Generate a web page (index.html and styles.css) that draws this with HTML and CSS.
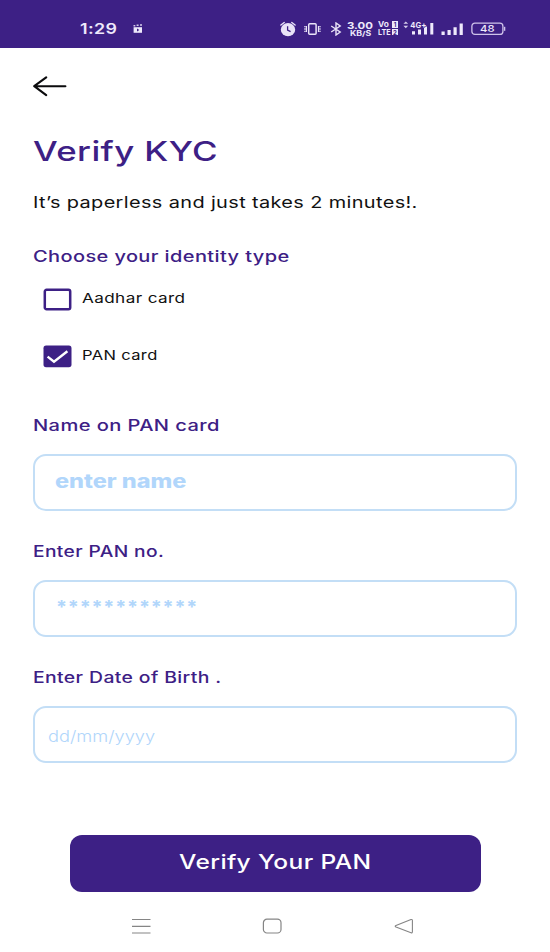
FILE: index.html
```html
<!DOCTYPE html>
<html lang="en">
<head>
<meta charset="utf-8">
<title>Verify KYC</title>
<link rel="stylesheet" href="styles.css">
</head>
<body>
<header class="status">
  <span class="clock"><span class="t clock-text">1:29</span></span>
  <svg class="icon-media" width="10" height="10" viewBox="0 0 10 10"><path d="M.6 3.2h8.4v5.6H.6z" fill="#eee9fb"/><path d="M.5 1.7h1.8M3.6 1.3h2M7 .9h2" stroke="#d5cbea" stroke-width="1.5"/><path d="M4 4.6l2.4 1.4L4 7.4z" fill="#3d2085"/></svg>
  <svg class="icon-alarm" width="16" height="16" viewBox="0 0 16 16"><ellipse cx="8" cy="8.7" rx="7.2" ry="6.6" fill="#e9e3f7"/><path d="M.9 4L4.2 1.5M15.1 4L11.8 1.5" stroke="#e9e3f7" stroke-width="1.4" stroke-linecap="round"/><path d="M7.6 5.2v4l3 1.5" fill="none" stroke="#3d2085" stroke-width="1.3"/></svg>
  <svg class="icon-vibrate" width="17" height="14" viewBox="0 0 17 14"><rect x="4.7" y="1.8" width="7.4" height="10.4" rx="1" fill="none" stroke="#e9e3f7" stroke-width="1.5"/><path d="M2.4 4v6M.9 4v1.3M.9 6.3v1.4M.9 8.7V10M14.5 4v6M16 4v1.3M16 6.3v1.4M16 8.7V10" stroke="#e9e3f7" stroke-width="1.2"/></svg>
  <svg class="icon-bt" width="12" height="14" viewBox="0 0 12 14"><path d="M1.2 4l9 6L6 13V1l4.2 3-9 6" fill="none" stroke="#e9e3f7" stroke-width="1.4"/></svg>
  <div class="speed"><span class="t speed-num">3.00</span><span class="t speed-unit">KB/S</span></div>
  <div class="volte"><span class="volte-row"><span class="t vo">Vo</span><i>1</i></span><span class="volte-row"><span class="t lte">LTE</span><i>2</i></span></div>
  <svg class="icon-cell" width="32" height="16" viewBox="0 0 32 16"><path d="M.4 3.8L2.8 1.4l2.4 2.4zM.4 5.8l2.4 2.4 2.4-2.4z" fill="#d5cbea"/><path d="M9 11.2h3v3.4H9zM15 9.5h3v5.1h-3zM21 6.5h3v8.1h-3zM27.3 3h3v11.6h-3z" fill="#eee9fb"/><text x="7.3" y="7.8" textLength="16" lengthAdjust="spacingAndGlyphs" class="cell-text">4G+</text></svg>
  <svg class="icon-bars" width="23" height="13" viewBox="0 0 23 13"><path d="M.5 8.5h3.2V12H.5zM6.5 7h3.2v5H6.5zM12.5 4.3h3.2V12h-3.2zM18.6.5h3.2V12h-3.2z" fill="#eee9fb"/></svg>
  <svg class="icon-battery" width="35" height="14" viewBox="0 0 35 14"><rect x=".9" y="1.2" width="31" height="11.2" rx="3" fill="none" stroke="#cfc3ea" stroke-width="1.3"/><path d="M33.6 4.8v4" stroke="#cfc3ea" stroke-width="1.4"/><text x="9" y="10.4" textLength="14.5" lengthAdjust="spacingAndGlyphs" class="battery-text">48</text></svg>
</header>
<main class="page">
  <svg class="back" width="36" height="24" viewBox="0 0 36 24"><path d="M32.4 12.2H1.4M13.2 3.3L1.2 12.2l12 8.9" fill="none" stroke="#0b0b0d" stroke-width="2.1" stroke-linecap="round" stroke-linejoin="round"/></svg>
  <h1><span class="t title">Verify KYC</span></h1>
  <p class="lead"><span class="t lead-text">It’s paperless and just takes 2 minutes!.</span></p>
  <h2 class="label"><span class="t choose">Choose your identity type</span></h2>
  <div class="options">
    <div class="option"><svg class="check" width="29" height="23" viewBox="0 0 29 23"><rect x="1.8" y="1.8" width="25.4" height="19.4" rx="1.8" fill="none" stroke="#3d2085" stroke-width="2.5"/></svg><span class="t aadhar">Aadhar card</span></div>
    <div class="option"><svg class="check" width="29" height="23" viewBox="0 0 29 23"><rect x=".5" y=".6" width="28" height="21.6" rx="2.6" fill="#3d2085"/><path d="M4.6 11.6l6.4 5.2L24.4 6.2" fill="none" stroke="#fff" stroke-width="2.4"/></svg><span class="t pan">PAN card</span></div>
  </div>
  <div class="field"><div class="label"><span class="t name">Name on PAN card</span></div><div class="box box-name"><span class="t ph-name">enter name</span></div></div>
  <div class="field"><div class="label"><span class="t number">Enter PAN no.</span></div><div class="box box-number"><span class="t ph-number">************</span></div></div>
  <div class="field"><div class="label"><span class="t birth">Enter Date of Birth .</span></div><div class="box box-birth"><span class="t ph-birth">dd/mm/yyyy</span></div></div>
  <div class="submit"><span class="t submit-text">Verify Your PAN</span></div>
</main>
<footer class="nav">
  <svg width="20" height="17" viewBox="0 0 20 17"><path d="M1 1.5h18.5M1 8.3h18.5M1 15h18.5" stroke="#858585" stroke-width="1.2"/></svg>
  <svg width="20" height="17" viewBox="0 0 20 17"><rect x="1.4" y="1.2" width="17.6" height="13.8" rx="3.6" fill="none" stroke="#858585" stroke-width="1.2"/></svg>
  <svg width="20" height="17" viewBox="0 0 20 17"><path d="M17 1.5L2 7.4q-1.6.8 0 1.6L17 14.8q1.4.3 1.4-1V2.6q0-1.4-1.4-1.1z" fill="none" stroke="#858585" stroke-width="1.1"/></svg>
</footer>
</body>
</html>
```
FILE: styles.css
```css
* { box-sizing: border-box; }
body { margin: 0; width: 550px; height: 952px; background: #fff; font-family: Inter, "Open Sans", sans-serif; overflow: hidden; }
h1, h2, p { margin: 0; }

/* Wide letterforms: each text is stretched to its own width */
.t { display: inline-block; white-space: nowrap; letter-spacing: .3px; transform: scaleX(var(--wide, 1)); transform-origin: 0 50%; }
.clock-text { --wide: 1.19; }
.speed-num { --wide: 1.2; }
.speed-unit { --wide: 1.25; }
.vo { --wide: 1.1; }
.lte { --wide: .95; }
.title { --wide: 1.268; }
.lead-text { --wide: 1.244; }
.choose { --wide: 1.29; }
.aadhar { --wide: 1.289; }
.pan { --wide: 1.24; }
.name { --wide: 1.298; }
.number { --wide: 1.238; }
.birth { --wide: 1.25; }
.ph-name { --wide: 1.236; }
.ph-number { --wide: 1.1; }
.ph-birth { --wide: 1.14; }
.submit-text { --wide: 1.227; }

.status { display: flex; align-items: flex-start; height: 47.5px; background: #3d2085; color: #eee9fb; }
.status svg, .status div, .clock { flex: none; }
.clock { width: 53px; margin: 18.5px 0 0 80px; font-size: 15px; line-height: 20px; font-weight: 600; }
.icon-media { margin-top: 24px; }
.icon-alarm { margin: 20.5px 0 0 137px; }
.icon-vibrate { margin: 22px 0 0 8px; }
.icon-bt { margin: 22px 0 0 9px; }
.speed { width: 27px; margin: 21px 0 0 5px; }
.speed-num, .speed-unit { display: block; width: max-content; font-weight: 700; letter-spacing: 0; }
.speed-num { font-size: 9.5px; line-height: 9px; }
.speed-unit { font-size: 7px; line-height: 7px; margin: 0 0 0 3px; }
.volte { width: 20px; margin: 21px 0 0 4px; font-size: 7.6px; font-weight: 700; }
.volte .t { letter-spacing: 0; }
.volte-row { display: flex; justify-content: space-between; line-height: 7.5px; }
.volte i { width: 6px; height: 6.5px; background: #eee9fb; color: #3d2085; font-size: 6px; line-height: 7px; text-align: center; font-style: normal; }
.icon-cell { margin: 20px 0 0 5px; }
.cell-text { font-size: 8px; font-weight: 700; fill: #eee9fb; stroke: #3d2085; stroke-width: .8px; paint-order: stroke; }
.icon-bars { margin: 22.5px 0 0 6px; }
.icon-battery { margin: 21.5px 0 0 7px; }
.battery-text { font-size: 9.5px; font-weight: 500; fill: #eee9fb; }

.page { padding: 26.5px 33px 0; }
.back { display: block; }
h1 { margin-top: 33px; height: 40px; font-size: 27.5px; line-height: 40px; font-weight: 500; color: #3d2085; }
.lead { margin-top: 18px; height: 24px; font-size: 16px; line-height: 26px; color: #111; }
.label { height: 24px; font-size: 15.5px; line-height: 26px; font-weight: 500; color: #3d2085; }
h2.label { margin-top: 31px; }
.options { margin: 20px 0 46px 10px; display: flex; flex-direction: column; gap: 35px; }
.option { display: flex; gap: 9.5px; height: 22px; font-size: 13.3px; line-height: 21px; color: #111; }
.field { margin-bottom: 28px; }
.box { height: 57px; margin-top: 17px; border: 2px solid #c3def6; border-radius: 13px; color: #b1d6fb; }
.box-name { padding: 13.5px 0 0 20px; font-size: 19px; line-height: 24px; font-weight: 800; }
.ph-name { letter-spacing: 0; }
.box-number { padding: 13px 0 0 20.5px; font-size: 18px; line-height: 24px; font-weight: 700; }
.ph-number { letter-spacing: .7px; }
.box-birth { padding: 15.5px 0 0 12.5px; font-size: 16px; line-height: 24px; font-weight: 300; }
.ph-birth { letter-spacing: 0; }
.submit { margin: 71.5px 36.5px 0; height: 57px; padding: 15px 0 0 109.5px; border-radius: 12px; background: #3d2085; color: #fff; font-size: 20px; line-height: 25px; font-weight: 500; }
.nav { display: flex; justify-content: space-between; padding: 26px 136.5px 0 131px; }
```
